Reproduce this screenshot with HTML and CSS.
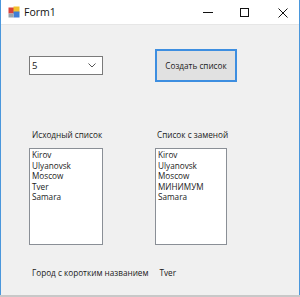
FILE: index.html
```html
<!DOCTYPE html>
<html lang="ru">
<head>
	<meta charset="UTF-8">
	<title>Form1</title>
<link rel="stylesheet" href="styles.css">
</head>
<body>

<div class="window">
	<div class="titleBar">
		<svg class="formIcon" width="12" height="12" viewBox="0 0 12 12">
			<rect x="0.5" y="1.5" width="6" height="6" fill="#d9403a"/>
			<rect x="5.5" y="0.5" width="6" height="6" fill="#f2c12e"/>
			<rect x="5.5" y="5.5" width="6" height="6" fill="#3f7fd6"/>
			<rect x="0.5" y="7.5" width="5" height="4" fill="#9aa3ad"/>
		</svg>
		<span class="title">Form1</span>
		<svg class="caption" width="100" height="24" viewBox="0 0 100 24">
			<path d="M6 12.5h10" stroke="#111" stroke-width="1"/>
			<rect x="43.5" y="8.5" width="8" height="8" fill="none" stroke="#111" stroke-width="1"/>
			<path d="M81.5 8.5l9 9M90.5 8.5l-9 9" stroke="#111" stroke-width="1"/>
		</svg>
	</div>

	<div class="client">
		<div class="form">
			<div class="combo">
				<span>5</span>
				<svg width="8" height="5" viewBox="0 0 8 5"><path d="M0.5 0.5l3.5 3.5 3.5-3.5" fill="none" stroke="#555" stroke-width="1"/></svg>
			</div>
			<button class="createBtn">Создать список</button>

			<div class="label">Исходный список</div>
			<div class="label second">Список с заменой</div>

			<div class="listBox">
				<div>Kirov</div>
				<div>Ulyanovsk</div>
				<div>Moscow</div>
				<div>Tver</div>
				<div>Samara</div>
			</div>
			<div class="listBox narrow">
				<div>Kirov</div>
				<div>Ulyanovsk</div>
				<div>Moscow</div>
				<div>МИНИМУМ</div>
				<div>Samara</div>
			</div>
		</div>

		<div class="result">
			<span>Город с коротким названием</span>
			<span class="city">Tver</span>
		</div>
	</div>
</div>
<div class="desktop"></div>

</body>
</html>
```

FILE: styles.css
```css
*{
	margin: 0;
	padding: 0;
	box-sizing: border-box;
}

body{
	width: 300px;
	height: 297px;
	overflow: hidden;
	background: #dcdcdc;
	font-family: "Open Sans", "Noto Sans", sans-serif;
	color: #1a1a1a;
}

.window{
	width: 300px;
	height: 295px;
	border-left: 1px solid #4a97dc;
	border-right: 1px solid #4a97dc;
	background: #f0f0f0;
	display: flex;
	flex-direction: column;
}

/* title bar */
.titleBar{
	height: 25px;
	flex: none;
	background: #fff;
	border-bottom: 1px solid #e6e6e6;
	display: flex;
	align-items: center;
	padding-left: 7px;
}

.formIcon{
	margin-right: 4px;
}

.title{
	font-size: 10.5px;
	color: #111;
	flex: 1;
}

.caption{
	margin-right: 2px;
}

/* client area */
.client{
	flex: 1;
	padding: 24px 0 0 28px;
	font-size: 8.2px;
}

.form{
	display: grid;
	grid-template-columns: 74px 82px;
	column-gap: 52px;
	align-items: center;
}

.combo{
	height: 19px;
	background: #fff;
	border: 1px solid #7a7a7a;
	display: flex;
	align-items: center;
	justify-content: space-between;
	padding: 0 6px 0 2px;
	font-size: 9.5px;
}

.createBtn{
	height: 33px;
	width: 82px;
	background: #e1e1e1;
	border: 2px solid #3d8ee0;
	font-family: inherit;
	font-size: 8.2px;
	color: #1a1a1a;
}

.label{
	margin-top: 47px;
	padding-left: 3px;
	line-height: 11px;
	white-space: nowrap;
}

.label.second{
	padding-left: 2px;
}

.listBox{
	margin-top: 8px;
	height: 97px;
	background: #fff;
	border: 1px solid #8a8f96;
	padding: 1px 0 0 2px;
	line-height: 10.5px;
}

.listBox.narrow{
	width: 72px;
}

.result{
	margin-top: 22px;
	padding-left: 3px;
	display: flex;
	gap: 11px;
	line-height: 11px;
}

.desktop{
	height: 2px;
	background: #c8c8c8;
}
```
